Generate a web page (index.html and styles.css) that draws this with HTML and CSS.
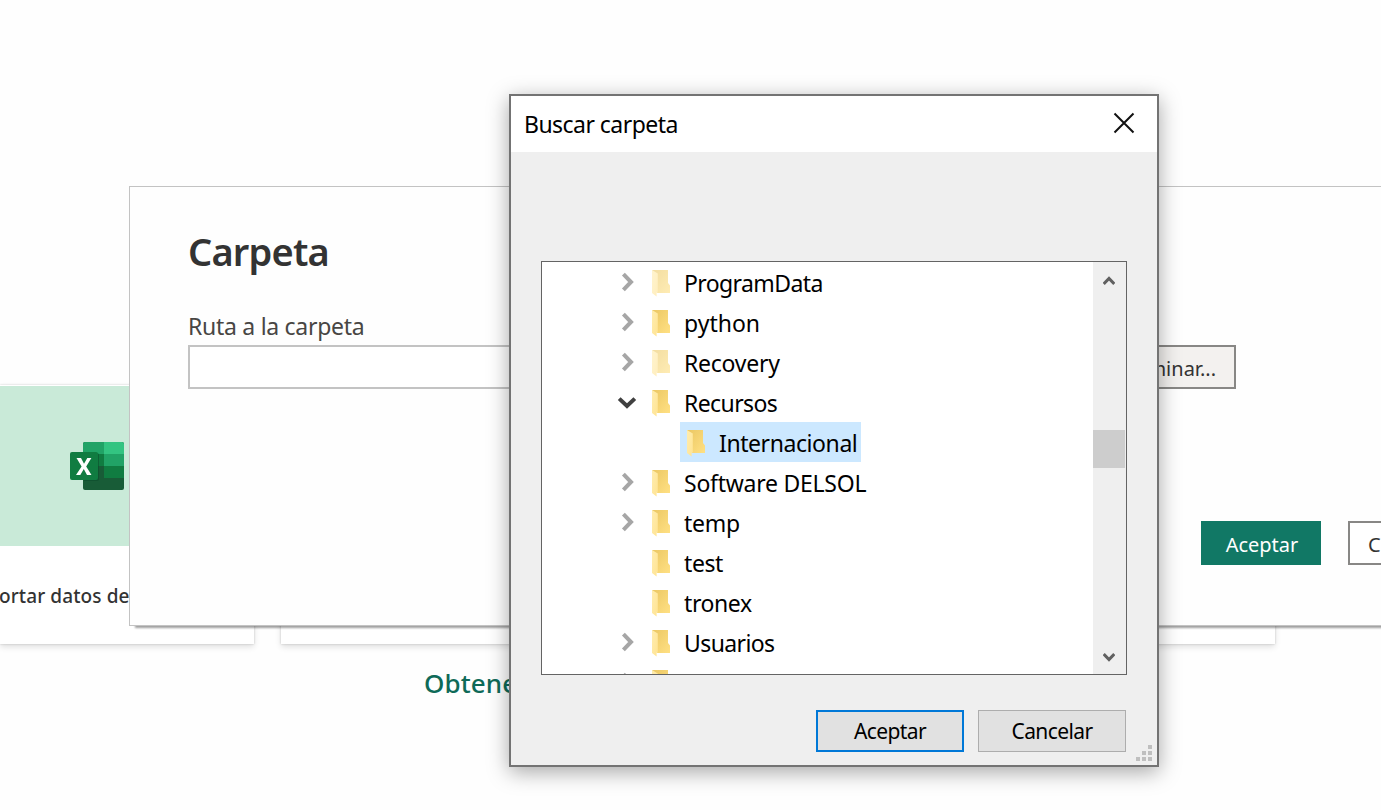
FILE: index.html
```
<!DOCTYPE html>
<html lang="es">
<head>
<meta charset="utf-8">
<title>Carpeta</title>
<link rel="stylesheet" href="styles.css">
</head>
<body>
<svg class="defs" width="0" height="0" aria-hidden="true">
  <defs>
    <linearGradient id="back" x1="0" y1="0" x2="1" y2="1"><stop offset="0" stop-color="#ebc763"/><stop offset="1" stop-color="#ffe083"/></linearGradient>
    <linearGradient id="front" x1="0" y1="0" x2="1" y2="1"><stop offset="0" stop-color="#ffedb0"/><stop offset="1" stop-color="#ffe391"/></linearGradient>
    <symbol id="folder" viewBox="0 0 20 28">
      <path d="M1 1H17V14L19 16.5V24H6Z" fill="url(#back)"/>
      <path d="M1 1L6.8 4.6V23.5H5.6V27.6L1 24Z" fill="url(#front)"/>
    </symbol>
    <symbol id="closed" viewBox="0 0 20 20"><path d="M6.4 2.2L14 10L6.4 17.8" fill="none" stroke="#a6a6a6" stroke-width="4"/></symbol>
    <symbol id="open" viewBox="0 0 20 20"><path d="M2.2 6.6L10 14L17.8 6.6" fill="none" stroke="#404040" stroke-width="4"/></symbol>
  </defs>
</svg>

<main class="home">
  <div class="cards">
    <section class="card first">
      <div class="banner">
        <svg class="excel" width="56" height="50" viewBox="0 0 56 50">
          <rect x="14" y="1" width="41" height="48" rx="2" fill="#185c37"/>
          <path d="M16 1H35V13H14V3Q14 1 16 1Z" fill="#21a366"/>
          <path d="M35 1H53Q55 1 55 3V13H35Z" fill="#33c481"/>
          <path d="M14 13H35V25H14Z" fill="#107c41"/>
          <path d="M35 13H55V25H35Z" fill="#21a366"/>
          <path d="M35 25H55V37H35Z" fill="#107c41"/>
          <rect x="14" y="12" width="16" height="28" rx="2" fill="#0b4a2b" opacity=".55"/>
          <rect x="1" y="11" width="28" height="28" rx="2" fill="#107c41"/>
          <path d="M7.5 17H12L15 22.8L18.3 17H22.4L17.2 25.4L22.5 34H18L14.8 28L11.3 34H7L12.6 25.4Z" fill="#fff"/>
        </svg>
      </div>
      <p class="caption">ortar datos de</p>
    </section>
    <section class="card"></section>
    <section class="card"></section>
    <section class="card"></section>
  </div>
  <p class="more">Obtene</p>
</main>

<section class="source">
  <h1>Carpeta</h1>
  <p class="label">Ruta a la carpeta</p>
  <div class="path"><div class="field"></div><div class="browse"><span>minar...</span></div></div>
  <div class="actions"><div class="primary"><span>Aceptar</span></div><div class="secondary"><span>C</span></div></div>
</section>

<section class="picker">
  <header class="titlebar"><span class="title">Buscar carpeta</span>
    <svg width="22" height="22" viewBox="0 0 22 22"><path d="M1.5 1.5L20.5 20.5M20.5 1.5L1.5 20.5" stroke="#111" stroke-width="2" fill="none"/></svg>
  </header>
  <div class="listbox">
    <div class="tree">
      <div class="row"><svg class="arrow"><use href="#closed"/></svg><svg class="folder faded"><use href="#folder"/></svg><span class="name tight">ProgramData</span></div>
      <div class="row"><svg class="arrow"><use href="#closed"/></svg><svg class="folder"><use href="#folder"/></svg><span class="name loose">python</span></div>
      <div class="row"><svg class="arrow"><use href="#closed"/></svg><svg class="folder faded"><use href="#folder"/></svg><span class="name">Recovery</span></div>
      <div class="row"><svg class="arrow"><use href="#open"/></svg><svg class="folder"><use href="#folder"/></svg><span class="name tight">Recursos</span></div>
      <div class="row child"><div class="selected"><svg class="folder"><use href="#folder"/></svg><span class="name snug">Internacional</span></div></div>
      <div class="row"><svg class="arrow"><use href="#closed"/></svg><svg class="folder"><use href="#folder"/></svg><span class="name">Software DELSOL</span></div>
      <div class="row"><svg class="arrow"><use href="#closed"/></svg><svg class="folder"><use href="#folder"/></svg><span class="name">temp</span></div>
      <div class="row"><svg class="arrow"></svg><svg class="folder"><use href="#folder"/></svg><span class="name snug">test</span></div>
      <div class="row"><svg class="arrow"></svg><svg class="folder"><use href="#folder"/></svg><span class="name snug">tronex</span></div>
      <div class="row"><svg class="arrow"><use href="#closed"/></svg><svg class="folder"><use href="#folder"/></svg><span class="name tight">Usuarios</span></div>
      <div class="row"><svg class="arrow"><use href="#closed"/></svg><svg class="folder"><use href="#folder"/></svg></div>
    </div>
    <div class="scrollbar">
      <svg width="12" height="10" viewBox="0 0 12 10"><path d="M.7 8L6 2.5L11.3 8" fill="none" stroke="#606060" stroke-width="3"/></svg>
      <div class="thumb"></div>
      <svg class="down" width="12" height="10" viewBox="0 0 12 10"><path d="M.7 2L6 7.5L11.3 2" fill="none" stroke="#606060" stroke-width="3"/></svg>
    </div>
  </div>
  <footer class="buttons"><div class="btn default"><span>Aceptar</span></div><div class="btn"><span>Cancelar</span></div></footer>
  <svg class="grip" width="16" height="16" viewBox="0 0 16 16"><path d="M12 0h4v4h-4zM6 6h4v4H6zM12 6h4v4h-4zM0 12h4v4H0zM6 12h4v4H6zM12 12h4v4h-4z" fill="#bfbfbf"/></svg>
</section>
</body>
</html>
```
FILE: styles.css
```
* { box-sizing: border-box; }
body {
  margin: 0;
  width: 1381px;
  height: 810px;
  position: relative;
  overflow: hidden;
  background: #fefefe;
  font-family: "Noto Sans", "Open Sans", sans-serif;
}
h1, p { margin: 0; white-space: nowrap; }
svg { flex: none; display: block; }
.defs { position: absolute; }

.home { padding-top: 385px; }
.cards { display: flex; gap: 27px; width: 1275px; }
.card {
  flex: 1;
  height: 259px;
  padding-top: 1px;
  background: #fff;
  box-shadow: 0 0 2px rgba(0,0,0,.18), 0 3px 6px rgba(0,0,0,.12);
}
.card.first { flex: 0 0 254px; }
.banner { height: 160px; background: #c9ead8; display: flex; align-items: center; justify-content: center; padding-right: 60px; }
.caption { margin-top: 36px; margin-left: -1px; font-size: 19px; line-height: 28px; font-weight: 500; color: #333; letter-spacing: .1px; }
.more { margin: 21px 0 0 424px; font-size: 26px; line-height: 36px; font-weight: 500; color: #0e6a58; letter-spacing: .1px; }

.source {
  position: absolute;
  left: 129px;
  top: 186px;
  width: 1252px;
  height: 440px;
  padding: 39px 0 0 58px;
  background: #fefefe;
  border: 1px solid #c3c3c3;
  border-right: 0;
  box-shadow: 6px 2px 2px rgba(0,0,0,.38);
  display: flex;
  flex-direction: column;
}
.source h1 { font-size: 38px; line-height: 50px; font-weight: 600; color: #333; letter-spacing: -.8px; }
.label { margin-top: 34px; font-size: 23px; line-height: 32px; color: #484644; letter-spacing: -.28px; }
.path { display: flex; margin-top: 3px; height: 44px; width: 1048px; }
.field { width: 800px; background: #fff; border: 2px solid #c3c3c3; margin-right: 60px; }
.browse { flex: 1; border: 2px solid #888785; background: #f3f1ef; color: #333; font-size: 20px; line-height: 43px; text-align: right; padding-right: 18px; }
.actions { display: flex; gap: 27px; margin: 132px 0 0 1013px; }
.primary, .secondary { flex: none; width: 120px; height: 44px; line-height: 47px; font-size: 20px; text-align: center; }
.primary { background: #117865; color: #fff; padding-left: 2px; }
.secondary { width: 33px; border: 2px solid #888785; border-right: 0; background: #fff; color: #333; text-align: left; padding-left: 18px; line-height: 43px; }

.picker {
  position: absolute;
  left: 509px;
  top: 94px;
  width: 650px;
  height: 673px;
  border: 2px solid #737373;
  background: #efefef;
  box-shadow: 0 5px 20px rgba(0,0,0,.35);
  color: #000;
}
.titlebar { height: 56px; background: #fff; display: flex; align-items: center; justify-content: space-between; padding: 0 22px 2px 13px; }
.title { font-size: 23px; line-height: 32px; padding-top: 2px; letter-spacing: -.54px; }
.listbox { margin: 109px 0 0 30px; width: 586px; height: 414px; border: 1px solid #646464; background: #fff; display: flex; }
.tree { flex: 1; overflow: hidden; }
.row { height: 40px; display: flex; padding-left: 75px; }
.arrow { width: 20px; height: 20px; margin-top: 10px; }
.folder { width: 20px; height: 28px; margin: 7px 0 0 14px; }
.faded { opacity: .6; }
.name { margin-left: 13px; font-size: 23px; line-height: 43px; white-space: nowrap; letter-spacing: -.25px; }
.name.tight { letter-spacing: -.6px; }
.name.snug { letter-spacing: -.42px; }
.name.loose { letter-spacing: 0; }
.child { padding-left: 138px; }
.selected { display: flex; width: 181px; background: #cce8ff; }
.selected .folder { margin-left: 6px; }
.scrollbar { width: 33px; background: #efefef; display: flex; flex-direction: column; align-items: flex-start; padding: 14px 0 12px; }
.scrollbar svg { margin-left: 10px; }
.thumb { width: 32px; height: 38px; margin-top: 144px; background: #cdcdcd; }
.scrollbar .down { margin-top: auto; }
.buttons { display: flex; gap: 14px; margin: 35px 0 0 305px; }
.btn { width: 148px; height: 42px; border: 1px solid #adadad; background: #e1e1e1; text-align: center; font-size: 21px; line-height: 41px; letter-spacing: -.6px; }
.default { border: 2px solid #0078d7; line-height: 39px; }
.grip { position: absolute; right: 5px; bottom: 4px; }
```
